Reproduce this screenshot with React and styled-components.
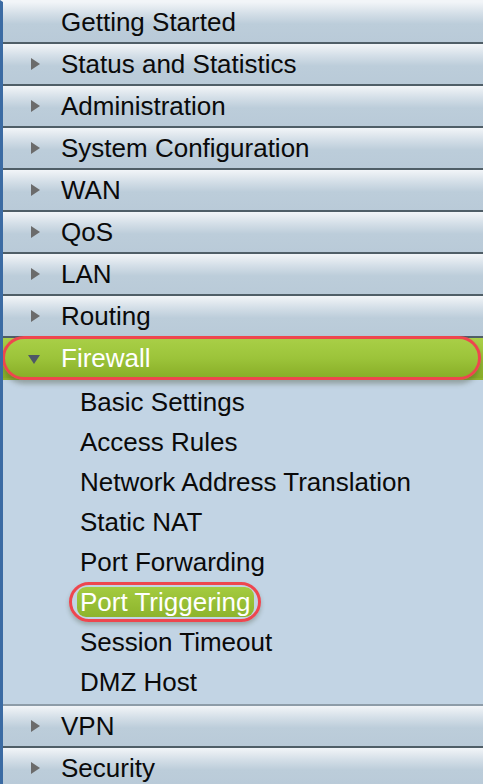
import React from 'react';
import styled, { createGlobalStyle } from 'styled-components';

const GlobalStyle = createGlobalStyle`
    body {
        margin: 0;
        background: #c2d4e4;
        font-family: "Liberation Sans", Arial, sans-serif;
    }
`

const StyledMenu = styled.div`
    width: 483px;
    height: 784px;
    overflow: hidden;
    border-left: 3px solid #3b6ba3;
    box-sizing: border-box;
    border-top: 2px solid #f2f5f8;
    background: #c2d4e4;
`

const Row = styled.div`
    position: relative;
    display: flex;
    align-items: center;
    height: 40px;
    border-bottom: 2px solid ${p => p.$active ? '#8fb330' : '#4f5e67'};
    background: ${p => p.$active
        ? 'linear-gradient(#a9cf47 0%, #9cc43a 50%, #88ad27 100%)'
        : 'linear-gradient(#f2f5f8 0%, #d3dee7 30%, #bccdda 55%, #b9cad8 100%)'};
    color: ${p => p.$active ? '#ffffff' : '#0a0a0a'};
    font-size: 26px;
`

const Arrow = styled.span`
    width: 0;
    height: 0;
    margin-left: 28px;
    margin-right: 21px;
    border-style: solid;
    border-color: transparent;
    ${p => p.$open
        ? `border-width: 9px 6px 0 6px; border-top-color: #4e5866; margin-left: 25px; margin-right: 21px; margin-top: 2px;`
        : `border-width: 6px 0 6px 9px; border-left-color: #6b6b6b;`}
`

const Spacer = styled.span`
    width: 58px;
`

const Label = styled.span`
    line-height: 1;
    white-space: nowrap;
`

// red annotation ring drawn over the open section
const Callout = styled.div`
    position: absolute;
    left: -1px;
    right: 2px;
    top: -2px;
    bottom: -2px;
    border: 3px solid #ee464e;
    border-radius: 22px;
    box-shadow: 0 4px 5px rgba(60, 70, 40, 0.35);
    pointer-events: none;
`

const SubList = styled.div`
    padding: 2px 0;
    background: #c2d4e4;
    border-bottom: 2px solid #8d9ca8;
`

const SubItem = styled.div`
    display: flex;
    align-items: center;
    height: 40px;
    padding-left: 74px;
    font-size: 26px;
`

const SubLabel = styled.span`
    position: relative;
    padding: 2px 3px;
    line-height: 1;
    white-space: nowrap;
    border-radius: 9px;
    color: ${p => p.$active ? '#ffffff' : '#0a0a0a'};
    background: ${p => p.$active ? 'linear-gradient(#a4cb40, #8db42c)' : 'transparent'};
`

const SubCallout = styled.div`
    position: absolute;
    left: -8px;
    right: -7px;
    top: -5px;
    bottom: -5px;
    border: 3px solid #ee464e;
    border-radius: 20px;
    box-shadow: 0 3px 4px rgba(60, 70, 40, 0.3);
    pointer-events: none;
`

const topItems = ['Status and Statistics', 'Administration', 'System Configuration', 'WAN', 'QoS', 'LAN', 'Routing']
const subItems = ['Basic Settings', 'Access Rules', 'Network Address Translation', 'Static NAT', 'Port Forwarding', 'Port Triggering', 'Session Timeout', 'DMZ Host']

function App() {
    return (
        <>
            <GlobalStyle />
            <StyledMenu>
                <Row>
                    <Spacer />
                    <Label>Getting Started</Label>
                </Row>
                {topItems.map(name => (
                    <Row key={name}>
                        <Arrow />
                        <Label>{name}</Label>
                    </Row>
                ))}
                <Row $active>
                    <Arrow $open />
                    <Label>Firewall</Label>
                    <Callout />
                </Row>
                <SubList>
                    {subItems.map(name => (
                        <SubItem key={name}>
                            <SubLabel $active={name === 'Port Triggering'}>
                                {name}
                                {name === 'Port Triggering' && <SubCallout />}
                            </SubLabel>
                        </SubItem>
                    ))}
                </SubList>
                <Row>
                    <Arrow />
                    <Label>VPN</Label>
                </Row>
                <Row>
                    <Arrow />
                    <Label>Security</Label>
                </Row>
            </StyledMenu>
        </>
    );
}

export default App;
